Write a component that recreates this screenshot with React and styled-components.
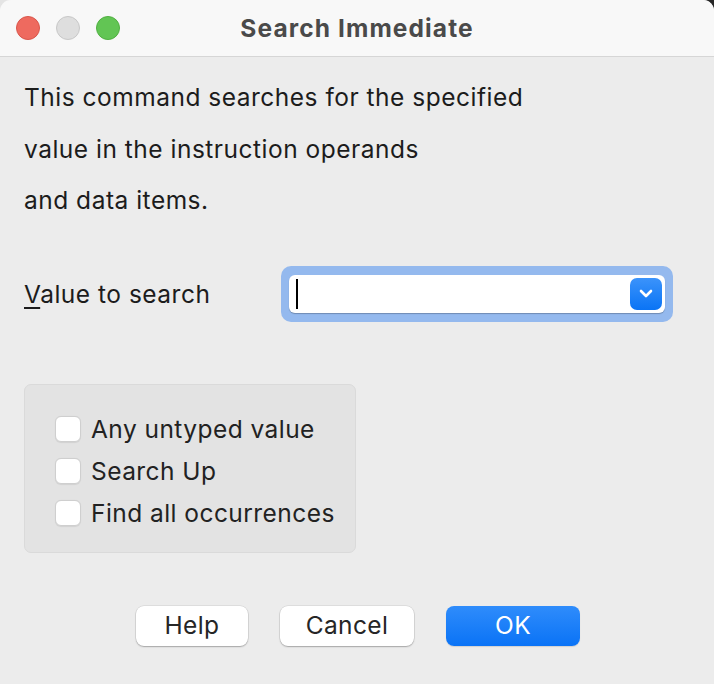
import React from "react";
import styled, { createGlobalStyle } from "styled-components";

const GlobalStyle = createGlobalStyle`
  html, body {
    margin: 0;
    padding: 0;
    background: linear-gradient(to right, #e4e4e4 0 50%, #262626 50%);
  }
  body {
    font-family: Inter, "Noto Sans", "Liberation Sans", sans-serif;
  }
`;

const Window = styled.div`
  width: 714px;
  height: 684px;
  background: #ececec;
  border-radius: 11px 11px 0 0;
  overflow: hidden;
  display: flex;
  flex-direction: column;
`;

const TitleBar = styled.div`
  height: 56px;
  flex: none;
  background: #f8f8f8;
  border-bottom: 1px solid #d6d6d6;
  display: grid;
  grid-template-columns: 1fr auto 1fr;
  align-items: center;
  padding: 0 16px;
`;

const Lights = styled.div`
  display: flex;
  gap: 16px;
`;

const Light = styled.span`
  width: 24px;
  height: 24px;
  border-radius: 50%;
  background: ${(p) => p.color};
  border: 1px solid ${(p) => p.edge};
  box-sizing: border-box;
`;

const Title = styled.div`
  font-size: 24.5px;
  font-weight: 700;
  color: #4a4a4a;
  letter-spacing: 1.1px;
  margin-top: -1px;
`;

const Body = styled.div`
  flex: 1;
  padding: 15px 24px 0 24px;
  display: flex;
  flex-direction: column;
`;

const Intro = styled.p`
  margin: 0;
  font-size: 24.5px;
  letter-spacing: 0.5px;
  line-height: 51.5px;
  color: #1c1c1c;
`;

const FieldRow = styled.div`
  display: flex;
  align-items: center;
  margin-top: 39px;
`;

const Label = styled.label`
  width: 257px;
  font-size: 24.5px;
  letter-spacing: 0.5px;
  color: #1c1c1c;
  span {
    text-decoration: underline;
    text-underline-offset: 4px;
    text-decoration-thickness: 1.5px;
  }
`;

const Focus = styled.div`
  width: 392px;
  height: 56px;
  box-sizing: border-box;
  padding: 9px 8px;
  background: #94b9ee;
  border-radius: 10px;
`;

const Combo = styled.div`
  height: 100%;
  background: #fff;
  border-radius: 6px;
  box-shadow: 0 1px 1px rgba(0, 0, 0, 0.25);
  display: flex;
  align-items: center;
  padding: 0 3px 0 7px;
`;

const Caret = styled.span`
  width: 2px;
  height: 30px;
  background: #000;
`;

const DropButton = styled.button`
  margin-left: auto;
  width: 32px;
  height: 32px;
  border: none;
  border-radius: 7px;
  padding: 0;
  background: linear-gradient(#3b93fb, #0a74f5);
  display: flex;
  align-items: center;
  justify-content: center;
`;

const Group = styled.div`
  margin-top: 62px;
  width: 332px;
  height: 169px;
  box-sizing: border-box;
  background: #e3e3e3;
  border: 1px solid #dadada;
  border-radius: 7px;
  padding: 31px 0 0 30px;
  display: flex;
  flex-direction: column;
  gap: 15px;
`;

const Check = styled.label`
  display: flex;
  align-items: center;
  gap: 10px;
  height: 27px;
  font-size: 24.5px;
  letter-spacing: 0.45px;
  color: #222;
`;

const Box = styled.span`
  width: 26px;
  height: 26px;
  box-sizing: border-box;
  background: #fff;
  border: 1px solid #cfcfcf;
  border-radius: 6px;
  box-shadow: 0 0.5px 1px rgba(0, 0, 0, 0.08);
`;

const Buttons = styled.div`
  display: flex;
  justify-content: center;
  gap: 32px;
  margin-top: 53px;
  padding-left: 2px;
`;

const Button = styled.button`
  height: 40px;
  width: ${(p) => p.w}px;
  border: none;
  border-radius: 8px;
  font-family: inherit;
  font-size: 24.5px;
  letter-spacing: 0.4px;
  padding: 0 0 2px;
  color: ${(p) => (p.primary ? "#fff" : "#262626")};
  background: ${(p) =>
    p.primary ? "linear-gradient(#2f8cfb, #0a73f6)" : "#fff"};
  box-shadow: ${(p) =>
    p.primary
      ? "0 1px 1px rgba(0,0,0,0.12)"
      : "0 0 0 0.5px rgba(0,0,0,0.12), 0 1px 1.5px rgba(0,0,0,0.25)"};
`;

export default function App() {
  return (
    <>
      <GlobalStyle />
      <Window>
        <TitleBar>
          <Lights>
            <Light color="#ee6a5f" edge="#d9564b" />
            <Light color="#dedede" edge="#c8c8c8" />
            <Light color="#62c554" edge="#50b041" />
          </Lights>
          <Title>Search Immediate</Title>
          <div />
        </TitleBar>
        <Body>
          <Intro>
            This command searches for the specified
            <br />
            value in the instruction operands
            <br />
            and data items.
          </Intro>
          <FieldRow>
            <Label>
              <span>V</span>alue to search
            </Label>
            <Focus>
              <Combo>
                <Caret />
                <DropButton>
                  <svg width="14" height="9" viewBox="0 0 14 9">
                    <path
                      d="M2 2 L7 7 L12 2"
                      fill="none"
                      stroke="#fff"
                      strokeWidth="2.6"
                      strokeLinecap="round"
                      strokeLinejoin="round"
                    />
                  </svg>
                </DropButton>
              </Combo>
            </Focus>
          </FieldRow>
          <Group>
            <Check>
              <Box />
              Any untyped value
            </Check>
            <Check>
              <Box />
              Search Up
            </Check>
            <Check>
              <Box />
              Find all occurrences
            </Check>
          </Group>
          <Buttons>
            <Button w={112}>Help</Button>
            <Button w={134}>Cancel</Button>
            <Button w={134} primary>
              OK
            </Button>
          </Buttons>
        </Body>
      </Window>
    </>
  );
}
